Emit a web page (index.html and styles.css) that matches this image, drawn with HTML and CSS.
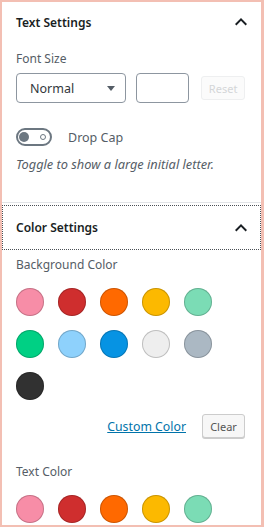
FILE: index.html
```html
<!DOCTYPE html>
<html>
<head>
<meta charset="utf-8">
<link rel="stylesheet" href="styles.css">
</head>
<body>
<div class="sidebar">
  <section class="panel panel-text">
    <div class="panel-header">
      <span class="panel-title">Text Settings</span>
      <svg class="chev" width="24" height="24" viewBox="0 0 24 24"><path d="M12 8l-6 6 1.41 1.41L12 10.83l4.59 4.59L18 14z" fill="#191e23"/></svg>
    </div>
    <div class="panel-body">
      <div class="label">Font Size</div>
      <div class="font-row">
        <div class="select"><span>Normal</span><svg width="8" height="5" viewBox="0 0 8 5"><path d="M0 0h8L4 5z" fill="#555d66"/></svg></div>
        <div class="num-input"></div>
        <div class="btn btn-disabled">Reset</div>
      </div>
      <div class="toggle-row">
        <div class="toggle"><span class="thumb"></span><span class="off-ring"></span></div>
        <span class="toggle-label">Drop Cap</span>
      </div>
      <div class="help">Toggle to show a large initial letter.</div>
    </div>
  </section>
  <section class="panel panel-color">
    <div class="panel-header focused">
      <span class="panel-title">Color Settings</span>
      <svg class="chev" width="24" height="24" viewBox="0 0 24 24"><path d="M12 8l-6 6 1.41 1.41L12 10.83l4.59 4.59L18 14z" fill="#191e23"/></svg>
    </div>
    <div class="panel-body">
      <div class="label">Background Color</div>
      <div class="swatches">
        <span class="sw" style="background:#f78da7"></span>
        <span class="sw" style="background:#cf2e2e"></span>
        <span class="sw" style="background:#ff6900"></span>
        <span class="sw" style="background:#fcb900"></span>
        <span class="sw" style="background:#7bdcb5"></span>
        <span class="sw" style="background:#00d084"></span>
        <span class="sw" style="background:#8ed1fc"></span>
        <span class="sw" style="background:#0693e3"></span>
        <span class="sw" style="background:#eeeeee"></span>
        <span class="sw" style="background:#abb8c3"></span>
        <span class="sw" style="background:#313131"></span>
      </div>
      <div class="custom-row">
        <a class="custom-link">Custom Color</a>
        <div class="btn btn-clear">Clear</div>
      </div>
      <div class="label label-text">Text Color</div>
      <div class="swatches">
        <span class="sw" style="background:#f78da7"></span>
        <span class="sw" style="background:#cf2e2e"></span>
        <span class="sw" style="background:#ff6900"></span>
        <span class="sw" style="background:#fcb900"></span>
        <span class="sw" style="background:#7bdcb5"></span>
      </div>
    </div>
  </section>
</div>
</body>
</html>
```
FILE: styles.css
```css
html, body {
  margin: 0;
  padding: 0;
  background: #fff;
}
.sidebar {
  width: 264px;
  height: 527px;
  box-sizing: border-box;
  border: 2px solid #f3bfb3;
  border-right-width: 3px;
  overflow: hidden;
  background: #fff;
  font-family: "Noto Sans", "Open Sans", sans-serif;
  font-size: 12px;
  color: #191e23;
}
.panel-text {
  border-bottom: 1px solid #e2e4e7;
}
.panel-header {
  display: flex;
  align-items: center;
  justify-content: space-between;
  height: 40px;
  padding: 0 8px 0 14px;
}
.panel-title {
  font-weight: 600;
  font-size: 12px;
  color: #191e23;
}
.chev {
  display: block;
}
.panel-header.focused {
  height: 45px;
  box-sizing: border-box;
  margin: 2px 0;
  border: 1px dotted #4a4f55;
  padding: 0 7px 0 13px;
}
.panel-body {
  padding: 0 16px 0 14px;
}
.panel-text .panel-body {
  padding-bottom: 29px;
}
.label {
  line-height: 18px;
  color: #555d66;
  margin-top: 8px;
}
.panel-color .label {
  margin-top: 6px;
}
.panel-color .label.label-text {
  margin-top: 25px;
}
.font-row {
  display: flex;
  align-items: center;
  margin-top: 5px;
  height: 30px;
}
.select {
  width: 110px;
  height: 30px;
  box-sizing: border-box;
  border: 1px solid #8d96a0;
  border-radius: 4px;
  display: flex;
  align-items: center;
  justify-content: space-between;
  padding: 0 10px 0 13px;
  color: #32373c;
  font-size: 12.5px;
}
.num-input {
  width: 54px;
  height: 30px;
  box-sizing: border-box;
  border: 1px solid #8d96a0;
  border-radius: 4px;
  margin-left: 10px;
}
.btn {
  box-sizing: border-box;
  height: 24px;
  display: flex;
  align-items: center;
  justify-content: center;
  font-size: 11px;
  border-radius: 3px;
}
.btn-disabled {
  width: 44px;
  margin-left: 12px;
  border: 1px solid #eeeff0;
  color: #d4d6d8;
  background: #fbfbfb;
}
.toggle-row {
  display: flex;
  align-items: center;
  margin-top: 25px;
  height: 18px;
}
.toggle {
  width: 36px;
  height: 18px;
  box-sizing: border-box;
  border: 2px solid #6c7781;
  border-radius: 9px;
  display: flex;
  align-items: center;
  justify-content: space-between;
  padding: 0 4px 0 1px;
}
.thumb {
  width: 10px;
  height: 10px;
  border-radius: 50%;
  background: #6c7781;
}
.off-ring {
  width: 6px;
  height: 6px;
  box-sizing: border-box;
  border: 1.5px solid #6c7781;
  border-radius: 50%;
}
.toggle-label {
  margin-left: 16px;
  color: #555d66;
  font-size: 12.5px;
}
.help {
  margin-top: 9px;
  line-height: 18px;
  font-style: italic;
  font-size: 12.8px;
  color: #555d66;
}
.swatches {
  display: grid;
  grid-template-columns: repeat(5, 28px);
  gap: 14px;
  margin-top: 14px;
}
.sw {
  width: 28px;
  height: 28px;
  border-radius: 50%;
  box-shadow: inset 0 0 0 1px rgba(0, 0, 0, 0.2);
}
.custom-row {
  display: flex;
  align-items: center;
  justify-content: flex-end;
  margin-top: 14px;
  height: 24px;
}
.custom-link {
  color: #0073aa;
  text-decoration: underline;
  margin-right: 16px;
  font-size: 12.3px;
}
.btn-clear {
  width: 43px;
  border: 1px solid #cccccc;
  background: #f7f7f7;
  color: #555555;
  box-shadow: 0 1px 0 #cccccc;
}
```
